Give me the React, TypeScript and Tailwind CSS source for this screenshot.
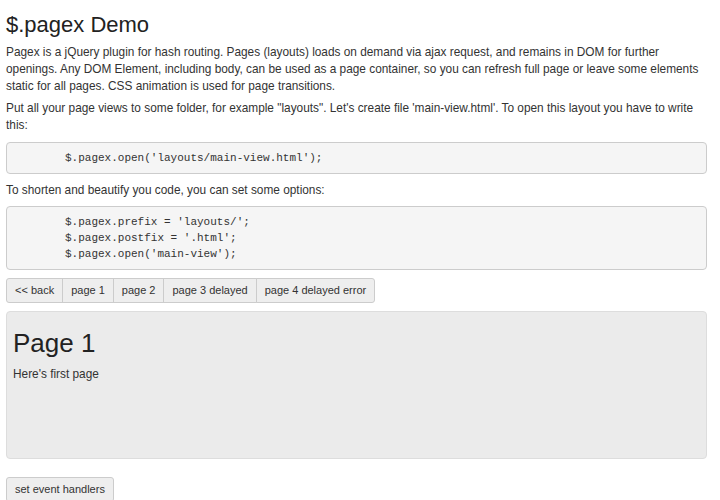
import React from 'react';

const navButtons = ['<< back', 'page 1', 'page 2', 'page 3 delayed', 'page 4 delayed error'];

const CodeBlock: React.FC<{ lines: string[] }> = ({ lines }) => (
  <pre className="bg-[#f5f5f5] border border-[#cccccc] rounded-[4px] py-[7px] pl-[58px] font-['Liberation_Mono',monospace] text-[11px] leading-[16px] text-[#333]">
    {lines.join('\n')}
  </pre>
);

const App: React.FC = () => {
  return (
    <div className="min-h-[500px] bg-white pl-[6px] pr-[13px] pt-[13px] font-['Liberation_Sans',Arial,sans-serif] text-[11.85px] leading-[17px] text-[#333] overflow-hidden">
      <h1 className="text-[22px] leading-[24px] text-[#222]">$.pagex Demo</h1>

      <p className="mt-[7px] mb-[5px]">
        Pagex is a jQuery plugin for hash routing. Pages (layouts) loads on demand via ajax request, and remains in DOM for
        further openings. Any DOM Element, including body, can be used as a page container, so you can refresh full page or
        leave some elements static for all pages. CSS animation is used for page transitions.
      </p>
      <p className="mb-[8px]">
        Put all your page views to some folder, for example "layouts". Let's create file 'main-view.html'. To open this
        layout you have to write this:
      </p>

      <CodeBlock lines={["$.pagex.open('layouts/main-view.html');"]} />

      <p className="mt-[8px] mb-[7px]">To shorten and beautify you code, you can set some options:</p>

      <CodeBlock lines={["$.pagex.prefix = 'layouts/';", "$.pagex.postfix = '.html';", "$.pagex.open('main-view');"]} />

      {/* nav buttons */}
      <div className="mt-[8px] flex">
        {navButtons.map((label, i) => (
          <button
            key={label}
            className={`h-[25px] px-[8px] bg-[#eeeeee] border border-[#cccccc] text-[11px] text-[#333] ${
              i === 0 ? 'rounded-l-[3px]' : '-ml-px'
            } ${i === navButtons.length - 1 ? 'rounded-r-[3px]' : ''}`}
          >
            {label}
          </button>
        ))}
      </div>

      <div className="mt-[8px] h-[148px] bg-[#ebebeb] border border-[#dddddd] rounded-[4px] pt-[17px] pl-[6px]">
        <h2 className="text-[26px] leading-[28px] text-[#222]">Page 1</h2>
        <p className="mt-[9px]">Here's first page</p>
      </div>

      <button className="mt-[18px] h-[25px] px-[8px] bg-[#eeeeee] border border-[#cccccc] rounded-[3px] text-[11px] text-[#333]">
        set event handlers
      </button>
    </div>
  );
};

export default App;
